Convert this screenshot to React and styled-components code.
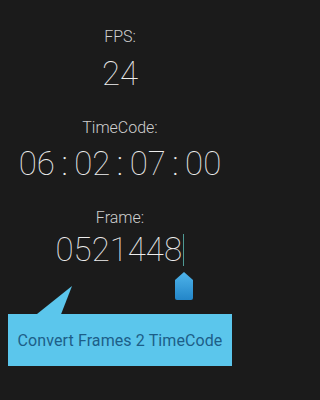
import React from 'react'
import styled, { createGlobalStyle } from 'styled-components'

const GlobalStyle = createGlobalStyle`
  html, body {
    margin: 0;
    padding: 0;
    background: #1b1b1b;
  }
  body {
    font-family: Roboto, "Noto Sans", sans-serif;
  }
`

const Screen = styled.div`
  width: 240px;
  height: 400px;
  box-sizing: border-box;
  padding-top: 27px;
  display: flex;
  flex-direction: column;
  align-items: center;
  background: #1b1b1b;
  overflow: hidden;
`

const Section = styled.div`
  display: flex;
  flex-direction: column;
  align-items: center;
  gap: ${props => props.gap}px;
  margin-bottom: 24px;
`

const Label = styled.div`
  font-size: 16px;
  line-height: 20px;
  font-weight: 300;
  color: #cfcfcf;
`

const Value = styled.div`
  font-size: 33px;
  line-height: 40px;
  font-weight: 100;
  color: #ededed;
  display: flex;
  align-items: center;
  gap: ${props => props.gap || 0}px;
`

const Colon = styled.span`
  font-weight: 200;
`

const Cursor = styled.span`
  position: relative;
  display: inline-block;
  width: 1.5px;
  height: 32px;
  margin-left: 1px;
  background: #4f9a94;
`

const Handle = styled.svg`
  position: absolute;
  left: -9px;
  top: 38px;
`

const Bubble = styled.div`
  position: relative;
  margin-top: 20px;
  width: 224px;
  height: 52px;
  display: flex;
  align-items: center;
  justify-content: center;
  background: #5bc6ec;
  color: #1d5e88;
  font-size: 16px;
  letter-spacing: 0.1px;

  &::before {
    content: '';
    position: absolute;
    left: 29px;
    top: -28px;
    width: 35px;
    height: 28px;
    background: #5bc6ec;
    clip-path: polygon(0 100%, 100% 0, 69% 100%);
  }
`

const App = () => {
  const timecode = ['06', '02', '07', '00']

  return (
    <Screen>
      <GlobalStyle />
      <Section gap={7}>
        <Label>FPS:</Label>
        <Value>24</Value>
      </Section>
      <Section gap={6}>
        <Label>TimeCode:</Label>
        <Value gap={6.5}>
          {timecode.map((part, i) => (
            <React.Fragment key={i}>
              {i > 0 && <Colon>:</Colon>}
              <span>{part}</span>
            </React.Fragment>
          ))}
        </Value>
      </Section>
      <Section gap={2}>
        <Label>Frame:</Label>
        <Value>
          0521448
          <Cursor>
            <Handle width="20" height="28" viewBox="0 0 20 28">
              <defs>
                <linearGradient id="hg" x1="0" y1="0" x2="0" y2="1">
                  <stop offset="0" stopColor="#4fb4ea" />
                  <stop offset="1" stopColor="#2386c9" />
                </linearGradient>
              </defs>
              <path d="M10 0 L19 8 L19 26 Q19 28 17 28 L3 28 Q1 28 1 26 L1 8 Z" fill="url(#hg)" />
            </Handle>
          </Cursor>
        </Value>
      </Section>
      <Bubble>Convert Frames 2 TimeCode</Bubble>
    </Screen>
  )
}

export default App
